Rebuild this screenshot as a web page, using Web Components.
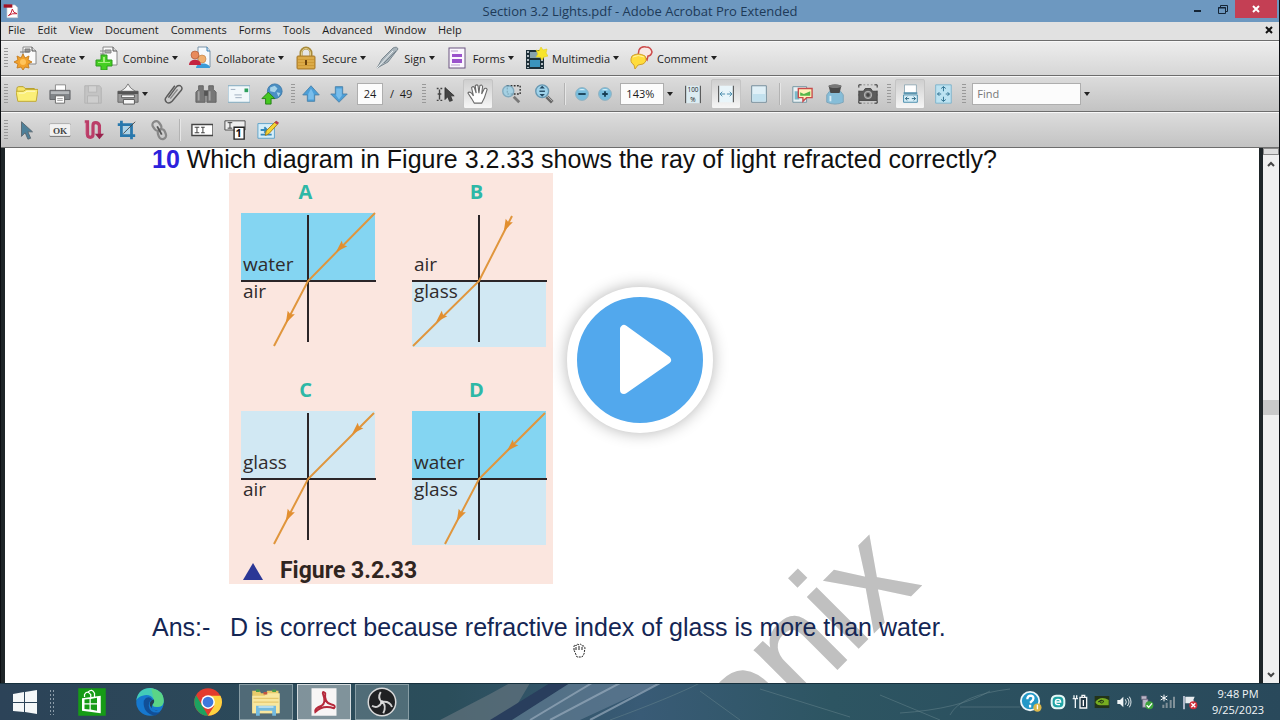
<!DOCTYPE html>
<html lang="en">
<head>
<meta charset="utf-8">
<title>Section 3.2 Lights.pdf - Adobe Acrobat Pro Extended</title>
<style>
  html, body { margin: 0; height: 100%; }
  body {
    --ui-text: #1c1c1c;
    --line: #6d6d6d;
    font-family: "Open Sans", "Noto Sans", sans-serif;
    font-size: 11px;
    color: var(--ui-text);
    overflow: hidden;
  }
</style>
</head>
<body>
<desktop-screen>
  <acrobat-window>
    <title-bar slot="title">Section 3.2 Lights.pdf - Adobe Acrobat Pro Extended</title-bar>
    <menu-bar slot="menu"></menu-bar>
    <tool-bar slot="bars">
      <task-button icon="create">Create</task-button>
      <task-button icon="combine">Combine</task-button>
      <task-button icon="collaborate">Collaborate</task-button>
      <task-button icon="secure">Secure</task-button>
      <task-button icon="sign">Sign</task-button>
      <task-button icon="forms">Forms</task-button>
      <task-button icon="multimedia">Multimedia</task-button>
      <task-button icon="comment">Comment</task-button>
    </tool-bar>
    <tool-bar slot="bars" tone="dark">
      <tool-button icon="folder" label="Open"></tool-button>
      <tool-button icon="print" label="Print"></tool-button>
      <tool-button icon="save" label="Save"></tool-button>
      <tool-button icon="scan" label="Organizer" caret></tool-button>
      <tool-button icon="clip" label="Attach a file"></tool-button>
      <tool-button icon="binoculars" label="Search"></tool-button>
      <tool-button icon="mail" label="Email"></tool-button>
      <tool-button icon="globe" label="Upload"></tool-button>
      <tool-grip></tool-grip>
      <tool-button icon="up" label="Previous page" size="small"></tool-button>
      <tool-button icon="down" label="Next page" size="small"></tool-button>
      <tool-field label="Page number" value="24" kind="page">/&nbsp; 49</tool-field>
      <tool-grip></tool-grip>
      <tool-button icon="select" label="Select tool"></tool-button>
      <tool-button icon="hand" label="Hand tool" active></tool-button>
      <tool-button icon="marquee" label="Marquee zoom"></tool-button>
      <tool-button icon="zoom" label="Dynamic zoom"></tool-button>
      <tool-grip plain></tool-grip>
      <tool-button icon="minus" label="Zoom out" size="tiny"></tool-button>
      <tool-button icon="plus" label="Zoom in" size="tiny"></tool-button>
      <tool-field label="Zoom value" value="143%" kind="zoom" caret></tool-field>
      <tool-button icon="actual" label="Actual size"></tool-button>
      <tool-button icon="fitwidth" label="Fit width" active></tool-button>
      <tool-button icon="page" label="Single page"></tool-button>
      <tool-grip plain></tool-grip>
      <tool-button icon="picture" label="Image tool"></tool-button>
      <tool-button icon="ink" label="Ink"></tool-button>
      <tool-button icon="camera" label="Snapshot"></tool-button>
      <tool-grip></tool-grip>
      <tool-button icon="scrolling" label="Scrolling pages" active></tool-button>
      <tool-button icon="fitpage" label="Fit page"></tool-button>
      <tool-grip></tool-grip>
      <tool-field label="Find" placeholder="Find" kind="find" caret></tool-field>
    </tool-bar>
    <tool-bar slot="bars" tone="dark">
      <tool-button icon="arrow" label="Select object"></tool-button>
      <tool-button icon="ok" label="Button tool"></tool-button>
      <tool-button icon="article" label="Article tool"></tool-button>
      <tool-button icon="crop" label="Crop tool"></tool-button>
      <tool-button icon="link" label="Link tool"></tool-button>
      <tool-grip plain></tool-grip>
      <tool-button icon="textfield" label="Text field"></tool-button>
      <tool-button icon="taborder" label="Tab order"></tool-button>
      <tool-button icon="touchup" label="TouchUp"></tool-button>
    </tool-bar>
    <pdf-page>
      <b slot="number">10</b>
      <span slot="question">Which diagram in Figure 3.2.33 shows the ray of light refracted correctly?</span>
      <ray-figure caption="Figure 3.2.33">
        <ray-diagram name="A" top="water" bottom="air" ray="134,0 67,68 33,133" heads="100,34,135 48,104,117"></ray-diagram>
        <ray-diagram name="B" top="air" bottom="glass" ray="100,3 67,68 1,133" heads="95,12,117 29,104,135"></ray-diagram>
        <ray-diagram name="C" top="glass" bottom="air" ray="133,2 67,68 33,133" heads="116,18,135 48,104,117"></ray-diagram>
        <ray-diagram name="D" top="water" bottom="glass" ray="133,2 67,68 33,133" heads="100,35,135 48,104,117"></ray-diagram>
      </ray-figure>
      <span slot="term">Ans:-</span>
      <span slot="answer">D is correct because refractive index of glass is more than water.</span>
    </pdf-page>
  </acrobat-window>
  <task-bar></task-bar>
  <play-button></play-button>
</desktop-screen>

<script>
// All icons share a 24 x 24 grid.
const ICONS = {
  create: `<path d="M9 1h9l4 4v13H9z" fill="#fafafa" stroke="#888"/><path d="M18 1v4h4" fill="#ddd" stroke="#555"/><path d="M11 3h5v3h-5zM6 6h9" fill="#999" stroke="#777"/><path d="M9 8l2 4 4-2-1 4 4 2-4 2 1 4-4-1-2 3-2-3-4 1 1-4-4-2 4-2-1-4 4 2z" fill="#f3a22b" stroke="#c98226"/><circle cx="9" cy="16" r="3" fill="#ffc45c"/>`,
  combine: `<path d="M8 1h10l4 4v14H8z" fill="#fafafa" stroke="#888"/><path d="M18 1v4h4" fill="#ddd" stroke="#555"/><path d="M10 4h6v3h-6zM5 5h5M5 8h5" fill="#aaa" stroke="#888"/><path d="M6 9h6v5h5v6h-5v4H6v-4H1v-6h5z" fill="#45cf22" stroke="#2e9a1e"/><path d="M8 11h2v5h5v1H3v-1h5z" fill="#a5f07e"/>`,
  collaborate: `<path d="M10 1h9l3 4v16H10z" fill="#f6fafd" stroke="#7b93a8"/><path d="M19 1v4h3" fill="#cfdfec" stroke="#3e83b5"/><path d="M8 22c0-6 14-6 14 0z" fill="#3a9bd8"/><circle cx="14" cy="13" r="4" fill="#f0b070" stroke="#b87a3f" stroke-width=".6"/><circle cx="7" cy="9" r="4" fill="#e88a5c" stroke="#a5532f" stroke-width=".6"/><path d="M1 19c0-7 12-7 12 0z" fill="#c4233f"/>`,
  secure: `<path d="M7 11V7a5 5 0 0 1 10 0v4" fill="none" stroke="#a88a3a" stroke-width="3"/><path d="M7.500 11V7a4.500 4.500 0 0 1 9 0v4" fill="none" stroke="#e3cf8a"/><rect x="3" y="10" width="18" height="13" rx="1" fill="#cf9a35" stroke="#a87c30"/><path d="M4 12h16M4 15h16M4 18h16M4 21h16" stroke="#e7bb5c"/><path d="M12 14v5" stroke="#6b430c" stroke-width="2"/>`,
  sign: `<path d="M1 22L6 13 17 2q4-2 5 1L12 16z" fill="#a9b4bb" stroke="#7b8890"/><path d="M1 22L17 5" stroke="#eef3f5"/><path d="M8 17L20 5" stroke="#75838c"/>`,
  forms: `<rect x="4" y="2" width="16" height="20" fill="#fbf7ff" stroke="#6b5580"/><path d="M7 8h10v3H7zM7 13h10v4H7z" fill="#9b52cc"/><path d="M6 5h7M6 19h9" stroke="#b9a2cc"/>`,
  multimedia: `<path d="M2 4h18v19H2z" fill="#1d2f38"/><path d="M6 6h10v6H6z" fill="#86a3ae"/><path d="M6 14h10v7H6z" fill="#3b94bd"/><path d="M4 5v17M18 5v17" stroke="#e4ecef" stroke-width="1.500" stroke-dasharray="2 2"/><path d="M12 4l3 1 2-4 2 3 4-1-1 4 2 3-4 1-2 3-2-3-4 0 2-3z" fill="#f8e52a" stroke="#e3cd1b" stroke-width=".6"/>`,
  comment: `<path d="M10 4q2-4 7-3 5 0 6 5-1 4-4 4l-1 4-3-3-6-1z" fill="#f8e8e4" stroke="#cc4b4b" stroke-width="1.500"/><path d="M3 10q6-4 13 0 3 5-2 8l-5 1-3 4-1-4q-5-3-2-9z" fill="#ffdc3c" stroke="#d0a02c"/><path d="M4 11q5-3 11 0" stroke="#fff3a5" fill="none"/>`,
  folder: `<path d="M1 6q0-2 2-2h5l2 2h10v4H1z" fill="#f6e46a" stroke="#b49b25"/><path d="M2 20L0 9h8l3-2h13l-2 13z" fill="#fbef77" stroke="#bfa62b"/><path d="M3 11h6l3-2h9" stroke="#fffbd2" fill="none"/>`,
  print: `<path d="M7 2h11v8H7z" fill="#fff" stroke="#888"/><path d="M1 8h22v10H1z" fill="#808488" stroke="#606366"/><path d="M2 9h20v3H2z" fill="#b7babd"/><path d="M7 14h10v8H7z" fill="#fff" stroke="#666"/><path d="M9 17h6M9 19h6" stroke="#999"/>`,
  save: `<path d="M3 3h16l2 2v17H3z" fill="#c4c4c4" stroke="#b2b2b2"/><path d="M7 3h9v7H7z" fill="#d2d2d2" stroke="#b6b6b6"/><path d="M6 14h12v8H6z" fill="#cecece" stroke="#b4b4b4"/>`,
  scan: `<path d="M1 9h22v12H1z" fill="#999" stroke="#666"/><path d="M4 9q6-3 8-8 2 5 8 8z" fill="#f6f6f6" stroke="#777"/><path d="M1 9h22v3H1z" fill="#555"/><path d="M5 13h14v3H5zM7 18h12v5H7z" fill="#f7f7f7" stroke="#555"/>`,
  clip: `<path d="M7 16L15 5q2-3 5-2 3 2 1 5L11 20q-3 3-6 1-3-3 0-6L14 3" fill="none" stroke="#5b5b5b" stroke-width="1.600"/><path d="M9 17l8-10" stroke="#888" stroke-width="1.600"/>`,
  binoculars: `<path d="M4 3h5v4l2 3v11H1V10l3-3zM15 3h5v4l3 3v11H13V10l2-3z" fill="#777" stroke="#606060"/><path d="M10 8h4v6h-4z" fill="#555"/><path d="M4 9v10M16 9v10" stroke="#a5a5a5" stroke-width="2"/>`,
  mail: `<rect x="0" y="3" width="24" height="18" fill="#f2f8fb" stroke="#7aa6bd"/><path d="M18 6h4v4h-4z" fill="#2da05e"/><path d="M3 7h5M7 13h8M8 16h7" stroke="#9ab"/>`,
  globe: `<circle cx="15" cy="9" r="8" fill="#4a8fc4" stroke="#3b78a8"/><path d="M10 5l5-2 3 3-3 4-5-1zM17 10l4 1-2 4z" fill="#a6d3e9"/><path d="M8 10l7 7h-4v6H5v-6H1z" fill="#46c820" stroke="#207d13"/>`,
  up: `<path d="M12 3l9 10h-5v7H8v-7H3z" fill="#4c9fd8" stroke="#4a82ab"/><path d="M9 12l3-6 3 6v6H9z" fill="#78bdeb"/>`,
  down: `<path d="M12 21l9-9h-5V4H8v8H3z" fill="#4c9fd8" stroke="#4a82ab"/><path d="M9 6h6v8l-3 4-3-4z" fill="#78bdeb"/>`,
  select: `<path d="M3 6h2M7 6h2M6 7v11M3 19h2M7 19h2M4 12h4" stroke="#444" stroke-width="1.500"/><path d="M12 5v13l3-3 2 5 3-1-2-5h4z" fill="#444" stroke="#333"/>`,
  hand: `<path d="M8 22L5 17 1 11q1-2 4 0l2 3L5 5q2-2 3 0l2 6-1-8q2-2 3 0l1 8 1-8q2-2 3 1l-1 8 3-6q2-1 3 1l-3 9-3 6z" fill="#fff" stroke="#6b6b6b" stroke-width="1.200"/>`,
  marquee: `<path d="M8 3h14v9H8z" fill="none" stroke="#333" stroke-width="1.500" stroke-dasharray="2 1.500"/><path d="M15 15l6 6" stroke="#777" stroke-width="3"/><circle cx="9" cy="9" r="6" fill="#9bd1e8" opacity=".8" stroke="#6fa2bb" stroke-width="1.500"/>`,
  zoom: `<path d="M15 15l6 6" stroke="#666" stroke-width="4"/><path d="M14 13l7 7" stroke="#bbb"/><circle cx="10" cy="9" r="7" fill="#9fd3eb" stroke="#6898b2" stroke-width="1.500"/><path d="M10 3l3 3H7zM10 15l3-3H7z" fill="#244a64"/><path d="M7 9h6" stroke="#244a64" stroke-width="1.500"/>`,
  minus: `<circle cx="12" cy="12" r="7" fill="#78bddd" stroke="#90b0be"/><path d="M8 8q4-3 8 0z" fill="#d6f2fb"/><path d="M8 12h8" stroke="#173f55" stroke-width="2"/>`,
  plus: `<circle cx="12" cy="12" r="7" fill="#78bddd" stroke="#90b0be"/><path d="M8 8q4-3 8 0z" fill="#d6f2fb"/><path d="M9 12h6M12 9v6" stroke="#173f55" stroke-width="2"/>`,
  actual: `<path d="M4 3h16v19H4z" fill="#dcecf2"/><path d="M4 3v19M20 3v19" stroke="#333"/><text x="12" y="10" font-size="7" text-anchor="middle" fill="#222">100</text><text x="12" y="21" font-size="7" text-anchor="middle" fill="#222">%</text>`,
  fitwidth: `<path d="M4 3h16v18H4z" fill="#e9f5fa"/><path d="M4 3v18M20 3v18" stroke="#333"/><path d="M6 12h5M13 12h5M8 9.500L5.500 12 8 14.500M16 9.500l2.500 2.500-2.500 2.500" fill="none" stroke="#4187a8"/>`,
  page: `<path d="M4 3h16v18H4z" fill="#e0f0f7" stroke="#6c8795"/><path d="M5 12h14v8H5z" fill="#c3e1ee"/>`,
  picture: `<path d="M2 4h15v17H2z" fill="#e9f1f4" stroke="#6e929f"/><path d="M4 9h5v9H4z" fill="#79bac9"/><path d="M8 6h15v10h-6l-4 4v-4H8z" fill="#fff2bb" stroke="#c84b4b" stroke-width="1.500"/><path d="M10 14v-4l4 2 7-3v5z" fill="#57b64b"/>`,
  ink: `<path d="M6 9h12l3 4v8q-9 4-18 0v-8z" fill="#86bdd8" stroke="#7ba3b8"/><path d="M5 3q7-3 14 0l-2 8H7z" fill="#494949"/><ellipse cx="12" cy="3.500" rx="7" ry="2" fill="#777"/><path d="M7 14v6" stroke="#d9eef7" stroke-width="2"/>`,
  camera: `<path d="M2 5V2h3M19 2h3v3M2 19v3h3M19 22h3v-3" fill="none" stroke="#222"/><path d="M7 2h10M7 22h10M2 8v8M22 8v8" stroke="#888" stroke-dasharray="2 2"/><path d="M2 9h5l2-3h6l2 3h5v10H2z" fill="#5c5c5c" stroke="#444"/><circle cx="12" cy="13" r="4" fill="#888" stroke="#bbb"/><circle cx="12" cy="13" r="2" fill="#444"/>`,
  scrolling: `<path d="M6 2h13v9H6z" fill="#fff" stroke="#92aab6"/><path d="M5 13h15v8H5z" fill="#d7eef7" stroke="#3f87a7"/><path d="M5 11h15" stroke="#3f87a7" stroke-width="1.500"/><path d="M7 17h4M14 17h4M9 15l-2 2 2 2M16 15l2 2-2 2" fill="none" stroke="#25627f"/>`,
  fitpage: `<path d="M4 2h17v20H4z" fill="#bce2f1" stroke="#7cb2ca"/><path d="M12.500 4v5M12.500 15v5M6 12h4M15 12h4M10 6l2.500-2L15 6M10 18l2.500 2 2.500-2M8 10l-2 2 2 2M17 10l2 2-2 2" fill="none" stroke="#276a8a"/>`,
  arrow: `<path d="M6 3v16l4-4 3 7 3-1-3-7h5z" fill="#4e8099" stroke="#5b6770"/>`,
  ok: `<rect x="0" y="5" width="24" height="14" rx="2" fill="#f1f1f1" stroke="#aaa"/><path d="M1 19h22" stroke="#777"/><text x="12" y="16" font-size="10" font-weight="700" text-anchor="middle" font-family="Liberation Serif, serif" fill="#444">OK</text>`,
  article: `<path d="M3 3h3v14q0 3 3 3t3-3V7q0-3 3-3t4 3v11" fill="none" stroke="#bb3d68" stroke-width="3.500"/><path d="M4 4v13" stroke="#d98aa6"/><path d="M14 16h10l-5 6z" fill="#97234c"/>`,
  crop: `<path d="M7 2v16h15M3 6h15v16" fill="none" stroke="#2878ad" stroke-width="3"/><path d="M9 8h7v8H9z" fill="#a9d4eb"/><path d="M9 16L22 3" stroke="#444"/>`,
  link: `<rect x="6" y="2" width="8" height="11" rx="4" transform="rotate(-35 10 8)" fill="none" stroke="#888" stroke-width="2.500"/><rect x="11" y="11" width="8" height="11" rx="4" transform="rotate(-20 15 16)" fill="none" stroke="#888" stroke-width="2.500"/><path d="M10 8l5 9" stroke="#555" stroke-width="2"/>`,
  textfield: `<path d="M1 6h23v12H1z" fill="#fff" stroke="#444" stroke-width="1.500"/><path d="M4 9h5M4 15h5M6.500 9v6M11 9h4M11 15h4M13 9v6" stroke="#333"/>`,
  taborder: `<path d="M1 2h22v10H1z" fill="#eee" stroke="#444"/><path d="M4 4h5M4 10h5M6.500 4v6" stroke="#333"/><path d="M11 9h11v13H11z" fill="#fff" stroke="#222" stroke-width="1.500"/><text x="16" y="20" font-size="12" font-weight="700" text-anchor="middle" fill="#111">1</text>`,
  touchup: `<path d="M1 5h18v16H1z" fill="#d6eef9" stroke="#5aa1c8"/><path d="M4 12h6M8 9l3 3-3 3M4 17h12" stroke="#3489b9" stroke-width="2"/><path d="M9 18l1-5L20 3l3 2-10 11z" fill="#f5d534" stroke="#a27c17"/><path d="M19 4l2-2 3 2-2 2z" fill="#b83a52"/>`,
  reader: `<path d="M6 3h12l4 4v15H6z" fill="#fff" stroke="#ccc"/><path d="M1 2h13v5H1z" fill="#a31425"/><path d="M8 19q5-3 6-10 1 6 7 7-8-1-13 3z" fill="none" stroke="#c7253a" stroke-width="1.500"/>`,
  windows: `<path d="M0 4l11-2v10H0zM12 2l12-2v12H12zM0 13h11v9L0 21zM12 13h12v11l-12-2z" fill="#f4f7f8"/>`,
  store: `<path d="M1 1h22v22H1z" fill="#169b16"/><path d="M4 9l15-2v14L4 19z" fill="#fff"/><path d="M6 8V6q2-4 5 0v2M9 4q3-3 5 1v3" fill="none" stroke="#fff"/><path d="M6 10l4-.5V13H6zM11 9.500l5-1V13h-5zM6 14h4v4l-4-.5zM11 14h5v5l-5-1z" fill="#169b16"/>`,
  edge: `<circle cx="12" cy="12" r="11" fill="#1678ce"/><path d="M1 11C2 3 8 0 14 1q9 2 9 10 0 5-5 5-4 0-4-2 2-2 1-4-3-5-9-3-4 1-5 4z" fill="#43cbb8"/><path d="M13 1q10 2 10 10 0 5-5 5-4 0-4-2 2-2 1-4z" fill="#65d872" opacity=".7"/><path d="M7 11q-1 10 9 12l5-3q-9 2-10-5 0-4 3-5-4-4-7 1z" fill="#114f97"/><path d="M15 10q-4 1-3 5 2 4 7 4h2q-10 0-7-5 2-2 1-4z" fill="#243e52"/>`,
  chrome: `<circle cx="12" cy="12" r="11" fill="#e33b2e"/><path d="M2.500 6.500L8 16l4 7A11 11 0 0 1 2.500 6.500z" fill="#1da260"/><path d="M12 7h10a11 11 0 0 1-10 16l5-8z" fill="#fdd341"/><circle cx="12" cy="12" r="5.500" fill="#fff"/><circle cx="12" cy="12" r="4.300" fill="#3f78dd"/>`,
  explorer: `<path d="M1 3h6l1 2h4l1-2h9v18H1z" fill="#e9cb6a"/><path d="M1 7h10l2-2h10v16H1z" fill="#f8e7a0"/><path d="M2 9h20M2 12h20" stroke="#e5c76c"/><path d="M4 3h3M17 3h3" stroke="#4a9b4d" stroke-width="2"/><path d="M10 5h3" stroke="#c25442" stroke-width="2"/><path d="M4 23v-8h16v8h-3v-4H7v4z" fill="#73badf"/><path d="M6 16h12" stroke="#d8f0fa"/>`,
  acrobat: `<path d="M2 1h20v22H2z" fill="#f7f5f5"/><path d="M5 20q-1-3 5-5 4-2 1-10 0-2 2 0-1 8 5 9 4 1 2 3-9-3-15 3z" fill="none" stroke="#b5293b" stroke-width="1.500"/>`,
  obs: `<circle cx="12" cy="12" r="11" fill="#202123" stroke="#d9dadb" stroke-width="1.200"/><path d="M11 4q-3 5 1 8 6-1 8 4M4 15q5 3 8-3M12 12q4 3 1 9" fill="none" stroke="#d2d2d2" stroke-width="1.500"/><circle cx="12" cy="12" r="1.500" fill="#ddd"/>`,
  help: `<circle cx="11" cy="11" r="10" fill="#2398c7" stroke="#edf7fa" stroke-width="2"/><path d="M8 9q0-4 4-4 4 1 2 5l-3 3M11 15v3" fill="none" stroke="#fff" stroke-width="2.500"/><circle cx="19" cy="18" r="4.500" fill="#dcb84a"/><path d="M19 15v5" stroke="#fff" stroke-width="1.500"/>`,
  eset: `<rect x="1" y="1" width="22" height="22" rx="8" fill="#e5f8f7"/><rect x="4" y="4" width="16" height="16" rx="6" fill="#20a4a5"/><path d="M8 12h8q0-4-4-4t-4 4 4 4h3" fill="none" stroke="#fff" stroke-width="2"/>`,
  battery: `<path d="M1 7h8M3 2v5M7 2v5M5 8v13" stroke="#edf3f5" stroke-width="2"/><path d="M12 5h10v16H12zM15 2h4v3h-4z" fill="#203644" stroke="#f3f6f7" stroke-width="2"/><path d="M16 9h2v9h-2z" fill="#fff"/>`,
  nvidia: `<path d="M1 3h22v18H1z" fill="#223319"/><path d="M2 12q8-10 20-3v8H9q-5 0-7-5z" fill="#77ad21"/><path d="M6 12q5-5 9-1-4 5-7 0l4-1" fill="none" stroke="#203216" stroke-width="1.500"/>`,
  sound: `<path d="M2 9h4l5-5v16l-5-5H2z" fill="#eef4f6"/><path d="M14 8q3 4 0 8M17 6q5 6 0 12M20 4q5 8 0 16" fill="none" stroke="#eef4f6" stroke-width="1.400"/>`,
  usb: `<path d="M5 3h8v5H5zM7 8h8v12H7z" fill="#bbb6c8" stroke="#726b83"/><circle cx="17" cy="17" r="6" fill="#3ca43b"/><path d="M13 17l3 3 5-6" fill="none" stroke="#fff" stroke-width="2"/>`,
  network: `<path d="M5 21v-5M10 21v-8M16 21V9M21 21V4" stroke="#819199" stroke-width="3"/><path d="M6 1v10M1 3l10 6M11 3L1 9" stroke="#fff" stroke-width="1.500"/>`,
  flag: `<path d="M3 3v20" stroke="#eef" stroke-width="2"/><path d="M5 4h14l-2 5 2 5H5z" fill="#e8ecef"/><circle cx="17" cy="17" r="6" fill="#cf2d3a"/><path d="M14 14l6 6M20 14l-6 6" stroke="#fff" stroke-width="2"/>`
};

const icon = (name, size = 24) =>
  `<svg width="${size}" height="${size}" viewBox="0 0 24 24" fill="none" aria-hidden="true">${ICONS[name]}</svg>`;

const CARET = '<svg width="6" height="4"><path d="M0 0h6L3 4z" fill="#222"/></svg>';

const RESET = `
  button {
    border: 0; margin: 0; padding: 0; background: none;
    font: inherit; color: inherit;
    display: flex; align-items: center; justify-content: center;
  }
  svg { display: block; flex: none; }
`;

class DesktopScreen extends HTMLElement {
  constructor() {
    super();
    this.attachShadow({ mode: 'open' }).innerHTML = `
      <style>
        :host { position: relative; display: flex; flex-direction: column; height: 100vh; }
      </style>
      <slot></slot>`;
  }
}

class AcrobatWindow extends HTMLElement {
  constructor() {
    super();
    this.attachShadow({ mode: 'open' }).innerHTML = `
      <style>
        :host {
          flex: 1; min-height: 0;
          display: flex; flex-direction: column;
          border: solid #0b0e12; border-width: 0 1px;
          box-sizing: border-box;
        }
        main { flex: 1; min-height: 0; display: flex; background: #1e2528; padding-left: 4px; gap: 4px; }
        ::slotted(pdf-page) { flex: 1; min-width: 0; }
      </style>
      <slot name="title"></slot>
      <slot name="menu"></slot>
      <slot name="bars"></slot>
      <main><slot></slot><scroll-track></scroll-track></main>`;
  }
}

class TitleBar extends HTMLElement {
  constructor() {
    super();
    this.attachShadow({ mode: 'open' }).innerHTML = `
      <style>
        ${RESET}
        :host {
          display: grid; grid-template-columns: 1fr auto 1fr;
          height: 22px; background: #6d98c0; color: #1d3a58;
          font-size: 13px; line-height: 22px;
        }
        .logo { padding: 3px 0 0 2px; }
        .controls { display: flex; justify-content: flex-end; padding-right: 2px; }
        .controls button { width: 25px; height: 18px; }
        .controls .close { width: 42px; background: #c43f54; }
      </style>
      <span class="logo">${icon('reader', 16)}</span>
      <span><slot></slot></span>
      <div class="controls">
        <button aria-label="Minimize"><svg width="12" height="12"><path d="M2 7h7v2H2z" fill="#142536"/></svg></button>
        <button aria-label="Restore"><svg width="12" height="12" fill="none" stroke="#142536"><path d="M1.500 4.500h7v6h-7zM3.500 4V2.500h7v6H9M1 5h8"/></svg></button>
        <button class="close" aria-label="Close"><svg width="10" height="10"><path d="M2 2l6 6M8 2L2 8" stroke="#fff" stroke-width="2"/></svg></button>
      </div>`;
  }
}

class MenuBar extends HTMLElement {
  constructor() {
    super();
    const items = ['File', 'Edit', 'View', 'Document', 'Comments', 'Forms', 'Tools', 'Advanced', 'Window', 'Help'];
    this.attachShadow({ mode: 'open' }).innerHTML = `
      <style>
        ${RESET}
        :host {
          display: flex; align-items: center; height: 15px; gap: 12px;
          padding: 0 6px 3px 7px; background: #e1e1e1; border-bottom: 1px solid var(--line);
        }
        .close { margin-left: auto; }
      </style>
      ${items.map(item => `<button>${item}</button>`).join('')}
      <button class="close" aria-label="Close document"><svg width="8" height="8"><path d="M1 1l6 6M7 1L1 7" stroke="#111" stroke-width="2"/></svg></button>`;
  }
}

class ToolGrip extends HTMLElement {
  constructor() {
    super();
    this.attachShadow({ mode: 'open' }).innerHTML = `
      <style>
        :host { display: flex; justify-content: center; width: 9px; flex: none; }
        :host([plain]) { width: 10px; }
        i { width: 4px; height: 22px; background: radial-gradient(circle, #999 35%, transparent 40%) 0 0 / 2px 3px; }
        :host([plain]) i { width: 1px; background: #b3b3b3; border-right: 1px solid #e6e6e6; }
      </style>
      <i></i>`;
  }
}

class ToolBar extends HTMLElement {
  constructor() {
    super();
    this.attachShadow({ mode: 'open' }).innerHTML = `
      <style>
        :host {
          display: flex; align-items: center; height: 32px; flex: none; padding-bottom: 1px;
          background: linear-gradient(#ededed, #d6d6d6);
          border-top: 1px solid #f8f8f8; border-bottom: 1px solid var(--line);
        }
        :host([tone=dark]) { height: 33px; background: linear-gradient(#dcdcdc, #c3c3c3); }
      </style>
      <tool-grip></tool-grip><slot></slot>`;
  }
}

class TaskButton extends HTMLElement {
  connectedCallback() {
    this.attachShadow({ mode: 'open' }).innerHTML = `
      <style>
        ${RESET}
        :host { display: block; padding: 0 6px 0 4px; }
        .label { padding: 0 3px 0 4px; }
      </style>
      <button>${icon(this.getAttribute('icon'))}<span class="label"><slot></slot></span>${CARET}</button>`;
  }
}

class ToolButton extends HTMLElement {
  connectedCallback() {
    this.attachShadow({ mode: 'open' }).innerHTML = `
      <style>
        ${RESET}
        :host { display: flex; justify-content: center; width: 33px; flex: none; }
        :host([caret]) { width: 47px; }
        :host([size=small]) { width: 28px; }
        :host([size=tiny]) { width: 23px; }
        button { height: 30px; gap: 3px; }
        :host([active]) button {
          width: 30px; box-sizing: border-box;
          background: linear-gradient(#cfcfcf, #f6f6f6); border: 1px solid #c4c4c4; border-radius: 2px;
        }
      </style>
      <button aria-label="${this.getAttribute('label')}">${icon(this.getAttribute('icon'), 22)}${this.hasAttribute('caret') ? CARET : ''}</button>`;
  }
}

class ToolField extends HTMLElement {
  connectedCallback() {
    const label = this.getAttribute('label');
    const caret = this.hasAttribute('caret') ? `<button aria-label="${label} options">${CARET}</button>` : '';
    this.attachShadow({ mode: 'open' }).innerHTML = `
      <style>
        ${RESET}
        :host { display: flex; align-items: center; flex: none; margin-left: 4px; }
        input {
          box-sizing: border-box; width: 26px; height: 22px; padding: 0;
          border: 1px solid #aeaeae; background: #fcfcfc;
          font: inherit; color: inherit; text-align: center;
        }
        input::placeholder { color: #777; opacity: 1; }
        button { width: 12px; height: 22px; }
        .after { padding: 0 7px; }
        :host([kind=zoom]) input { width: 44px; padding-right: 4px; }
        :host([kind=find]) input { width: 109px; padding-left: 4px; text-align: left; }
        :host([caret]) .after { display: none; }
      </style>
      <input aria-label="${label}" value="${this.getAttribute('value') || ''}" placeholder="${this.getAttribute('placeholder') || ''}">
      <span class="after"><slot></slot></span>${caret}`;
  }
}

class ScrollTrack extends HTMLElement {
  constructor() {
    super();
    this.attachShadow({ mode: 'open' }).innerHTML = `
      <style>
        ${RESET}
        :host { display: flex; flex-direction: column; width: 16px; background: #efefef; }
        .split { height: 7px; box-sizing: border-box; border: 1px solid #888; background: #ddd; }
        button { height: 17px; }
        .track { flex: 1; display: grid; grid-template-rows: 228fr 15px 250fr; }
        .thumb { grid-row: 2; background: #c9c9c9; }
      </style>
      <div class="split"></div>
      <button aria-label="Scroll up"><svg width="8" height="6"><path d="M1 5l3-3 3 3" fill="none" stroke="#444" stroke-width="2"/></svg></button>
      <div class="track"><div class="thumb"></div></div>
      <button aria-label="Scroll down"><svg width="8" height="6"><path d="M1 1l3 3 3-3" fill="none" stroke="#444" stroke-width="2"/></svg></button>`;
  }
}

class PdfPage extends HTMLElement {
  constructor() {
    super();
    this.attachShadow({ mode: 'open' }).innerHTML = `
      <style>
        :host {
          display: block; position: relative; overflow: hidden; background: #fff;
          font-family: "Liberation Sans", Arial, sans-serif; font-size: 25px; line-height: 22px;
        }
        article { position: relative; padding-left: 147px; }
        p { margin: 0; white-space: nowrap; }
        .question { padding-bottom: 3px; color: #111; }
        .number { color: #2c22dc; }
        ::slotted(ray-figure) { margin-left: 77px; }
        .answer { display: flex; padding-top: 32px; color: #142654; }
        .term { width: 78px; }
        .watermark { position: absolute; left: 595px; top: 332px; }
        .cursor { position: absolute; left: 566px; top: 494px; }
      </style>
      <svg class="watermark" width="400" height="300" fill="#c0c0c0" stroke="#c0c0c0" stroke-width="2" font-size="135">
        <text transform="translate(146 280) rotate(-45)">onix</text>
      </svg>
      <article>
        <p class="question"><span class="number"><slot name="number"></slot></span> <slot name="question"></slot></p>
        <slot></slot>
        <p class="answer"><span class="term"><slot name="term"></slot></span><slot name="answer"></slot></p>
      </article>
      <svg class="cursor" width="16" height="16" viewBox="0 0 16 16">
        <path d="M3 8V4q1-2 2 0 1-3 3-1 2-2 3 1 2-1 3 2l-1 6-2 3H6z" fill="#fff" stroke="#222" stroke-dasharray="2 1"/>
        <path d="M5 5v3M8 4v4M11 5v3" stroke="#222"/>
      </svg>`;
  }
}

const FILL = { water: '#84d5f2', glass: '#d1e8f3', air: 'none' };

class RayFigure extends HTMLElement {
  connectedCallback() {
    this.attachShadow({ mode: 'open' }).innerHTML = `
      <style>
        :host {
          display: block; width: 324px; box-sizing: border-box; padding: 6px 0 0 12px;
          background: #fbe6df; font-family: "Open Sans", "Noto Sans", sans-serif;
        }
        figure { margin: 0; }
        .grid { display: grid; grid-template: 198px 183px / 135px 135px; column-gap: 36px; }
        figcaption {
          display: flex; align-items: center; gap: 17px; height: 22px; padding: 0 0 2px 2px;
          font: 700 23px/22px Roboto, sans-serif; color: #30251f;
        }
      </style>
      <figure>
        <div class="grid"><slot></slot></div>
        <figcaption><svg width="20" height="17"><path d="M10 0l10 17H0z" fill="#2b3796"/></svg>${this.getAttribute('caption')}</figcaption>
      </figure>`;
  }
}

// The point where the ray crosses the surface is (67, 68) in every diagram.
class RayDiagram extends HTMLElement {
  connectedCallback() {
    const top = this.getAttribute('top');
    const bottom = this.getAttribute('bottom');
    const heads = this.getAttribute('heads').split(' ').map(head => {
      const [x, y, angle] = head.split(',');
      return `<path d="M7 0L-5-4-3 0-5 4z" transform="translate(${x} ${y}) rotate(${angle})" fill="#e28f30"/>`;
    }).join('');
    this.attachShadow({ mode: 'open' }).innerHTML = `
      <style>
        :host { display: block; color: #302b2b; }
        h3 { margin: 0; padding-right: 6px; font-size: 20px; line-height: 26px; height: 34px; color: #2eb8a6; text-align: center; }
        svg { display: block; overflow: visible; }
        text { font-size: 19px; fill: currentColor; }
      </style>
      <h3>${this.getAttribute('name')}</h3>
      <svg width="135" height="134">
        <path d="M0 0h134v68H0z" fill="${FILL[top]}"/>
        <path d="M0 68h134v66H0z" fill="${FILL[bottom]}"/>
        <path d="M0 68h135M67 2v127" stroke="#2b2528" stroke-width="2"/>
        <text x="2" y="58">${top}</text>
        <text x="2" y="85">${bottom}</text>
        <polyline points="${this.getAttribute('ray')}" fill="none" stroke="#e0963d" stroke-width="2"/>
        ${heads}
      </svg>`;
  }
}

class PlayButton extends HTMLElement {
  constructor() {
    super();
    this.attachShadow({ mode: 'open' }).innerHTML = `
      <style>
        ${RESET}
        :host { position: absolute; inset: 0; display: grid; place-items: center; pointer-events: none; }
        button {
          width: 146px; height: 146px; box-sizing: border-box;
          border: 10px solid #fff; border-radius: 50%; background: #52a8ed;
          box-shadow: 0 0 16px rgba(0, 0, 0, .3); pointer-events: auto;
        }
      </style>
      <button aria-label="Play video">
        <svg width="126" height="126"><path d="M47 32v61l43-30z" fill="#fff" stroke="#fff" stroke-width="8" stroke-linejoin="round"/></svg>
      </button>`;
  }
}

class TaskBar extends HTMLElement {
  constructor() {
    super();
    const apps = [['store', ''], ['edge', ''], ['chrome', ''], ['explorer', 'open'], ['acrobat', 'open current'], ['obs', 'open']];
    const tray = ['eset', 'battery', 'nvidia', 'sound', 'usb', 'network', 'flag'];
    this.attachShadow({ mode: 'open' }).innerHTML = `
      <style>
        ${RESET}
        :host {
          position: relative; display: flex; height: 37px; flex: none; overflow: hidden;
          background: linear-gradient(90deg, #2c4358, #2b4e5b 35%, #395b76 50%, #2d5562 65%, #29495b);
          color: #f2f6f8;
        }
        .wallpaper { position: absolute; inset: 0; width: 100%; height: 100%; }
        .bar { position: relative; flex: 1; display: flex; align-items: center; }
        .start { width: 49px; height: 37px; }
        .grip { width: 6px; height: 26px; margin-right: 8px; background: radial-gradient(circle, #8b9ca9 30%, transparent 35%) 0 0 / 3px 4px; }
        .app { width: 54px; height: 36px; margin: 0 2px; box-sizing: border-box; }
        .open { background: rgba(150, 170, 175, .35); border: 1px solid rgba(190, 205, 210, .5); }
        .current { background: rgba(185, 195, 198, .6); border-color: #d4dbde; }
        .tray { display: flex; align-items: center; margin-left: auto; }
        .tray button { width: 22px; height: 30px; }
        .tray .help { width: 32px; }
        time { width: 70px; margin-left: 2px; padding-right: 7px; text-align: center; line-height: 16px; }
      </style>
      <svg class="wallpaper" viewBox="0 0 1280 37" preserveAspectRatio="none" fill="none">
        <path d="M440 37l50-26 20-11h20l-22 37z" fill="#62737e" opacity=".7"/>
        <path d="M490 37L550 0h20l-58 37z" fill="#293e5d"/>
        <path d="M512 37L570 0h90l-80 37z" fill="#667f96" opacity=".65"/>
        <path d="M530 37l62-37M550 37l70-37M590 37l70-37" stroke="#9cafc0" stroke-width="2" opacity=".65"/>
        <path d="M610 37q60-22 90-37M700 8l40 29M760 6l90 28M880 12l60 25M900 30q60-4 90-22M950 32q10-20 60-26M960 24h60" stroke="#68868d" opacity=".5"/>
        <path d="M0 .5h1280" stroke="#17313e"/>
      </svg>
      <div class="bar">
        <button class="start" aria-label="Start">${icon('windows')}</button>
        <span class="grip"></span>
        ${apps.map(([name, state]) => `<button class="app ${state}" aria-label="${name}">${icon(name, 30)}</button>`).join('')}
        <div class="tray">
          <button class="help" aria-label="help">${icon('help', 22)}</button>
          ${tray.map(name => `<button aria-label="${name}">${icon(name, 16)}</button>`).join('')}
          <time datetime="2023-09-25T21:48">9:48 PM<br>9/25/2023</time>
        </div>
      </div>`;
  }
}

customElements.define('desktop-screen', DesktopScreen);
customElements.define('acrobat-window', AcrobatWindow);
customElements.define('title-bar', TitleBar);
customElements.define('menu-bar', MenuBar);
customElements.define('tool-grip', ToolGrip);
customElements.define('tool-bar', ToolBar);
customElements.define('task-button', TaskButton);
customElements.define('tool-button', ToolButton);
customElements.define('tool-field', ToolField);
customElements.define('scroll-track', ScrollTrack);
customElements.define('pdf-page', PdfPage);
customElements.define('ray-figure', RayFigure);
customElements.define('ray-diagram', RayDiagram);
customElements.define('play-button', PlayButton);
customElements.define('task-bar', TaskBar);
</script>
</body>
</html>
